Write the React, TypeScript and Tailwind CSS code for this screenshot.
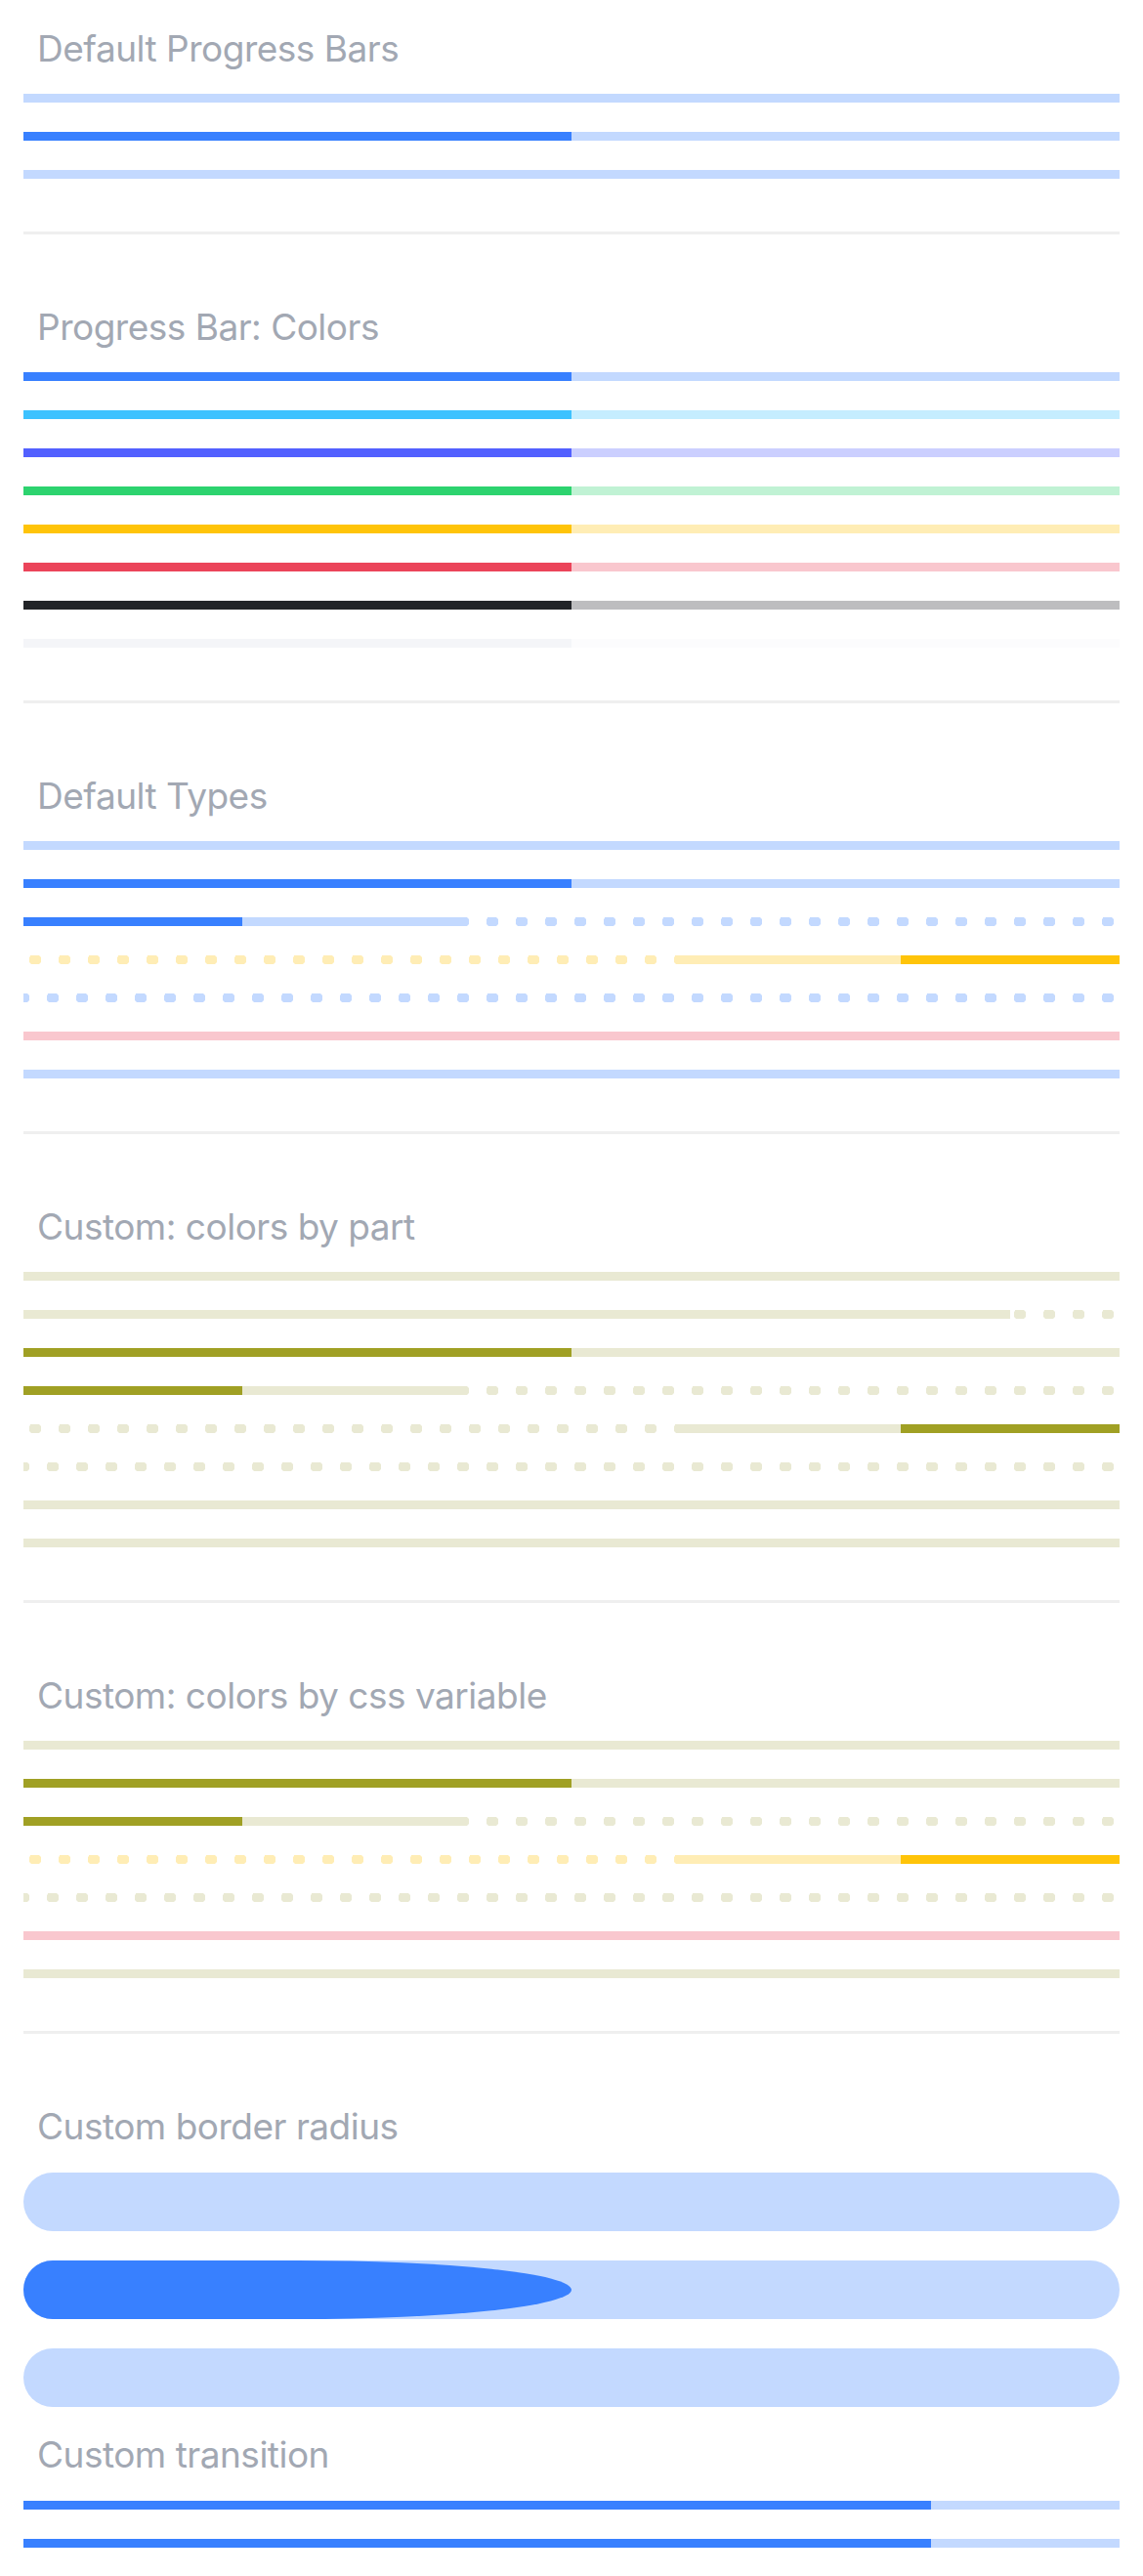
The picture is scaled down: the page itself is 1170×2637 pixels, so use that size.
import clsx from 'clsx';
import type { ReactNode } from 'react';

type Tone = { fill: string; track: string; dots: string };

// colours are ionic's palette, track = 30% of the colour over white
const primary: Tone = {
  fill: 'bg-[#3880ff]',
  track: 'bg-[#c3d9ff]',
  dots: 'bg-[image:radial-gradient(ellipse_at_center,#c3d9ff_0%,#c3d9ff_30%,transparent_30%)]',
};
const warning: Tone = {
  fill: 'bg-[#ffc409]',
  track: 'bg-[#ffedb5]',
  dots: 'bg-[image:radial-gradient(ellipse_at_center,#ffedb5_0%,#ffedb5_30%,transparent_30%)]',
};
const danger: Tone = {
  fill: 'bg-[#eb445a]',
  track: 'bg-[#f9c7ce]',
  dots: 'bg-[image:radial-gradient(ellipse_at_center,#f9c7ce_0%,#f9c7ce_30%,transparent_30%)]',
};
const olive: Tone = {
  fill: 'bg-[#a0a024]',
  track: 'bg-[#e9e9d3]',
  dots: 'bg-[image:radial-gradient(ellipse_at_center,#e9e9d3_0%,#e9e9d3_30%,transparent_30%)]',
};

const palette = [
  { fill: 'bg-[#3880ff]', track: 'bg-[#c3d9ff]' },
  { fill: 'bg-[#3dc2ff]', track: 'bg-[#c5edff]' },
  { fill: 'bg-[#5260ff]', track: 'bg-[#cbcfff]' },
  { fill: 'bg-[#2dd36f]', track: 'bg-[#c0f2d4]' },
  { fill: 'bg-[#ffc409]', track: 'bg-[#ffedb5]' },
  { fill: 'bg-[#eb445a]', track: 'bg-[#f9c7ce]' },
  { fill: 'bg-[#222428]', track: 'bg-[#bdbdbf]' },
  { fill: 'bg-[#f4f5f8]', track: 'bg-[#fcfcfd]' },
];

type BarProps = {
  tone: Pick<Tone, 'fill' | 'track'> & { dots?: string };
  value?: number;
  buffer?: number;
  reversed?: boolean;
};

const Bar = ({ tone, value = 0, buffer = 1, reversed }: BarProps) => {
  const dotted = buffer < 1;
  return (
    <div
      className={clsx(
        'flex h-[9px] w-full overflow-hidden',
        reversed && 'flex-row-reverse',
        dotted
          ? [
              tone.dots,
              'bg-[length:30px_30px] bg-repeat-x',
              reversed ? 'bg-[position:right_15px_center]' : 'bg-[position:15px_center]',
            ]
          : tone.track
      )}
    >
      <div className={clsx('h-full shrink-0', tone.fill)} style={{ width: `${value * 100}%` }} />
      {dotted && (
        <div className={clsx('h-full shrink-0', tone.track)} style={{ width: `${(buffer - value) * 100}%` }} />
      )}
    </div>
  );
};

const Title = ({ children, className }: { children: ReactNode; className?: string }) => (
  <h2
    className={clsx(
      'h-[48px] pl-[14px] text-[37px] leading-[48px] font-normal tracking-[-0.5px] text-[#a2a8b3]',
      className
    )}
  >
    {children}
  </h2>
);

const Rows = ({ children, className }: { children: ReactNode; className?: string }) => (
  <div className={clsx('mt-[22px] flex flex-col gap-[30px]', className)}>{children}</div>
);

const Divider = () => <div className="mt-[54px] h-[3px] bg-[#efefef]" />;

export default function App() {
  return (
    <div className="min-h-[2637px] w-full bg-white px-6 pt-[26px] font-[Inter,sans-serif]">
      <Title>Default Progress Bars</Title>
      <Rows>
        <Bar tone={primary} />
        <Bar tone={primary} value={0.5} />
        <Bar tone={primary} />
      </Rows>
      <Divider />

      <Title className="mt-[71px]">Progress Bar: Colors</Title>
      <Rows>
        {palette.map((tone) => (
          <Bar key={tone.fill} tone={tone} value={0.5} />
        ))}
      </Rows>
      <Divider />

      <Title className="mt-[71px]">Default Types</Title>
      <Rows>
        <Bar tone={primary} />
        <Bar tone={primary} value={0.5} />
        <Bar tone={primary} value={0.2} buffer={0.4} />
        <Bar tone={warning} value={0.2} buffer={0.4} reversed />
        <Bar tone={primary} buffer={0} />
        <Bar tone={danger} />
        <Bar tone={primary} />
      </Rows>
      <Divider />

      <Title className="mt-[71px]">Custom: colors by part</Title>
      <Rows>
        <Bar tone={olive} />
        <Bar tone={olive} buffer={0.9} />
        <Bar tone={olive} value={0.5} />
        <Bar tone={olive} value={0.2} buffer={0.4} />
        <Bar tone={olive} value={0.2} buffer={0.4} reversed />
        <Bar tone={olive} buffer={0} />
        <Bar tone={olive} />
        <Bar tone={olive} />
      </Rows>
      <Divider />

      <Title className="mt-[71px]">Custom: colors by css variable</Title>
      <Rows>
        <Bar tone={olive} />
        <Bar tone={olive} value={0.5} />
        <Bar tone={olive} value={0.2} buffer={0.4} />
        <Bar tone={warning} value={0.2} buffer={0.4} reversed />
        <Bar tone={olive} buffer={0} />
        <Bar tone={danger} />
        <Bar tone={olive} />
      </Rows>
      <Divider />

      <Title className="mt-[71px]">Custom border radius</Title>
      <div className="mt-[23px] flex flex-col gap-[30px]">
        <div className="h-[60px] rounded-[30px] bg-[#c3d9ff]" />
        <div className="h-[60px] overflow-hidden rounded-[30px] bg-[#c3d9ff]">
          <div className="h-full w-1/2 rounded-r-[280px_30px] bg-[#3880ff]" />
        </div>
        <div className="h-[60px] rounded-[30px] bg-[#c3d9ff]" />
      </div>

      <Title className="mt-[25px]">Custom transition</Title>
      <Rows className="mt-[23px]">
        <Bar tone={primary} value={0.828} />
        <Bar tone={primary} value={0.828} />
      </Rows>
    </div>
  );
}
